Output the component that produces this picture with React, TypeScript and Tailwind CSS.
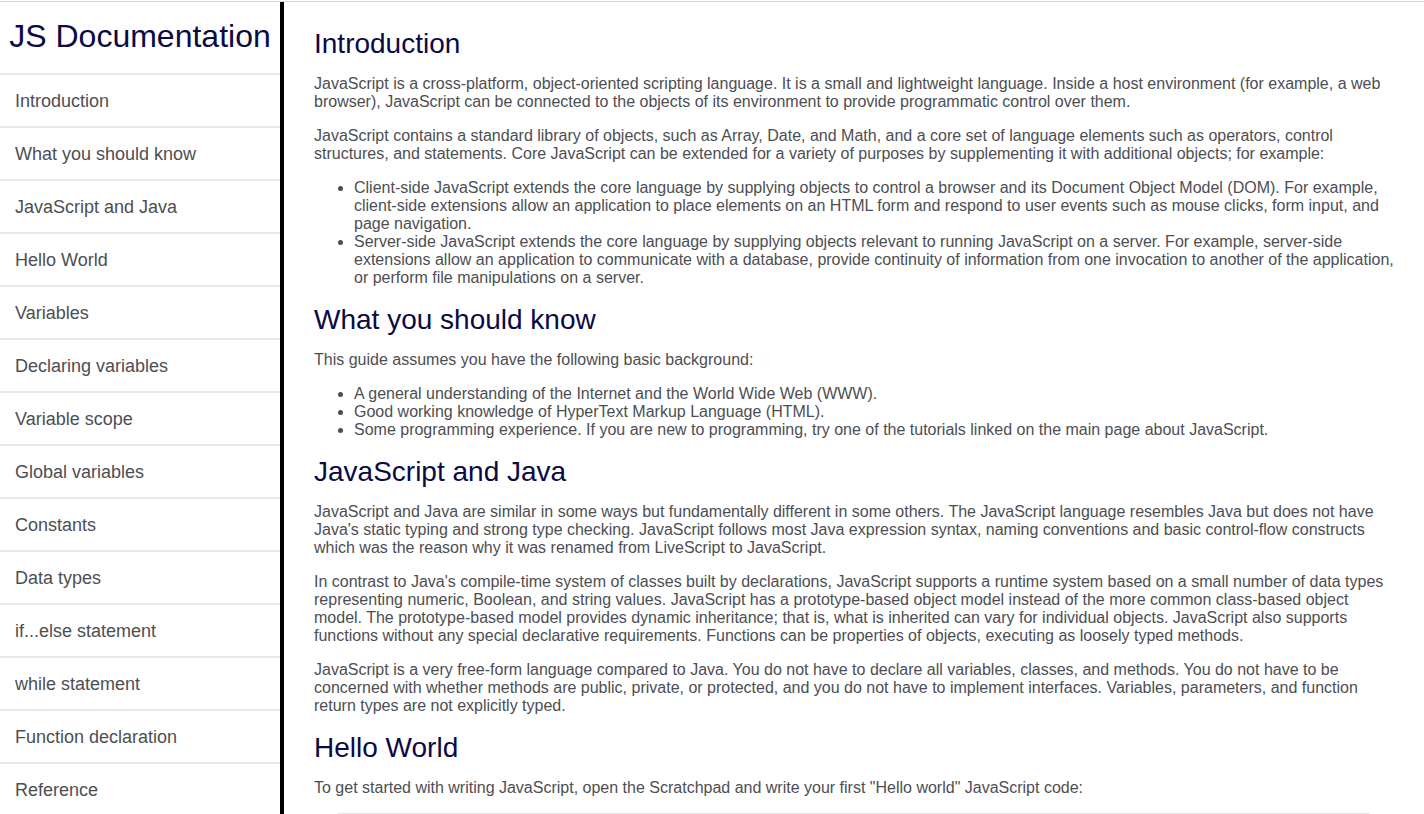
const navItems = [
  'Introduction',
  'What you should know',
  'JavaScript and Java',
  'Hello World',
  'Variables',
  'Declaring variables',
  'Variable scope',
  'Global variables',
  'Constants',
  'Data types',
  'if...else statement',
  'while statement',
  'Function declaration',
  'Reference',
];

function Heading({ children, first }: { children: React.ReactNode; first?: boolean }) {
  return (
    <h2 className={`${first ? 'mt-0' : 'mt-[17px]'} mb-[15px] text-[28px] leading-[32px] font-normal text-[#0a0a45]`}>
      {children}
    </h2>
  );
}

export default function App() {
  return (
    <div className="h-screen overflow-hidden bg-white font-['Liberation_Sans',Arial,sans-serif] flex flex-col">
      <div className="h-[2px] border-b border-[#d4d4d4]" />

      <div className="flex-1 flex min-h-0">
        {/* Sidebar */}
        <nav className="w-[284px] shrink-0 border-r-4 border-black">
          <header className="h-[71px] flex items-center justify-center pb-[2px]">
            <h1 className="text-[32px] leading-[37px] text-[#0a0a45] font-normal">JS Documentation</h1>
          </header>
          <ul>
            {navItems.map((item) => (
              <li key={item} className="border-t-2 border-[#e8e8e8]">
                <a href={'#' + item.replace(/ /g, '_')} className="block px-[15px] pt-[16px] pb-[14px] text-[18px] leading-[21px] text-[#4d4e53]">
                  {item}
                </a>
              </li>
            ))}
          </ul>
        </nav>

        {/* Main content */}
        <main className="flex-1 pl-[30px] pr-[24px] pt-[26px] text-[16px] leading-[18px] text-[#4d4e53]">
          <section>
            <Heading first>Introduction</Heading>
            <p className="mb-4">
              JavaScript is a cross-platform, object-oriented scripting language. It is a small and lightweight language. Inside a host environment (for example, a web browser), JavaScript can be connected to the objects of its environment to provide programmatic control over them.
            </p>
            <p className="my-4">
              JavaScript contains a standard library of objects, such as Array, Date, and Math, and a core set of language elements such as operators, control structures, and statements. Core JavaScript can be extended for a variety of purposes by supplementing it with additional objects; for example:
            </p>
            <ul className="my-4 pl-10 list-disc">
              <li>
                Client-side JavaScript extends the core language by supplying objects to control a browser and its Document Object Model (DOM). For example, client-side extensions allow an application to place elements on an HTML form and respond to user events such as mouse clicks, form input, and page navigation.
              </li>
              <li>
                Server-side JavaScript extends the core language by supplying objects relevant to running JavaScript on a server. For example, server-side extensions allow an application to communicate with a database, provide continuity of information from one invocation to another of the application, or perform file manipulations on a server.
              </li>
            </ul>
          </section>

          <section>
            <Heading>What you should know</Heading>
            <p className="mb-4">This guide assumes you have the following basic background:</p>
            <ul className="my-4 pl-10 list-disc">
              <li>A general understanding of the Internet and the World Wide Web (WWW).</li>
              <li>Good working knowledge of HyperText Markup Language (HTML).</li>
              <li>Some programming experience. If you are new to programming, try one of the tutorials linked on the main page about JavaScript.</li>
            </ul>
          </section>

          <section>
            <Heading>JavaScript and Java</Heading>
            <p className="mb-4">
              JavaScript and Java are similar in some ways but fundamentally different in some others. The JavaScript language resembles Java but does not have Java's static typing and strong type checking. JavaScript follows most Java expression syntax, naming conventions and basic control-flow constructs which was the reason why it was renamed from LiveScript to JavaScript.
            </p>
            <p className="my-4">
              In contrast to Java's compile-time system of classes built by declarations, JavaScript supports a runtime system based on a small number of data types representing numeric, Boolean, and string values. JavaScript has a prototype-based object model instead of the more common class-based object model. The prototype-based model provides dynamic inheritance; that is, what is inherited can vary for individual objects. JavaScript also supports functions without any special declarative requirements. Functions can be properties of objects, executing as loosely typed methods.
            </p>
            <p className="my-4">
              JavaScript is a very free-form language compared to Java. You do not have to declare all variables, classes, and methods. You do not have to be concerned with whether methods are public, private, or protected, and you do not have to implement interfaces. Variables, parameters, and function return types are not explicitly typed.
            </p>
          </section>

          <section>
            <Heading>Hello World</Heading>
            <p className="mb-4">
              To get started with writing JavaScript, open the Scratchpad and write your first "Hello world" JavaScript code:
            </p>
            <div className="mt-4 ml-6 mr-[30px] h-24 border-t border-[#e5e5e5] bg-[#fafafa]" />
          </section>
        </main>
      </div>
    </div>
  );
}
